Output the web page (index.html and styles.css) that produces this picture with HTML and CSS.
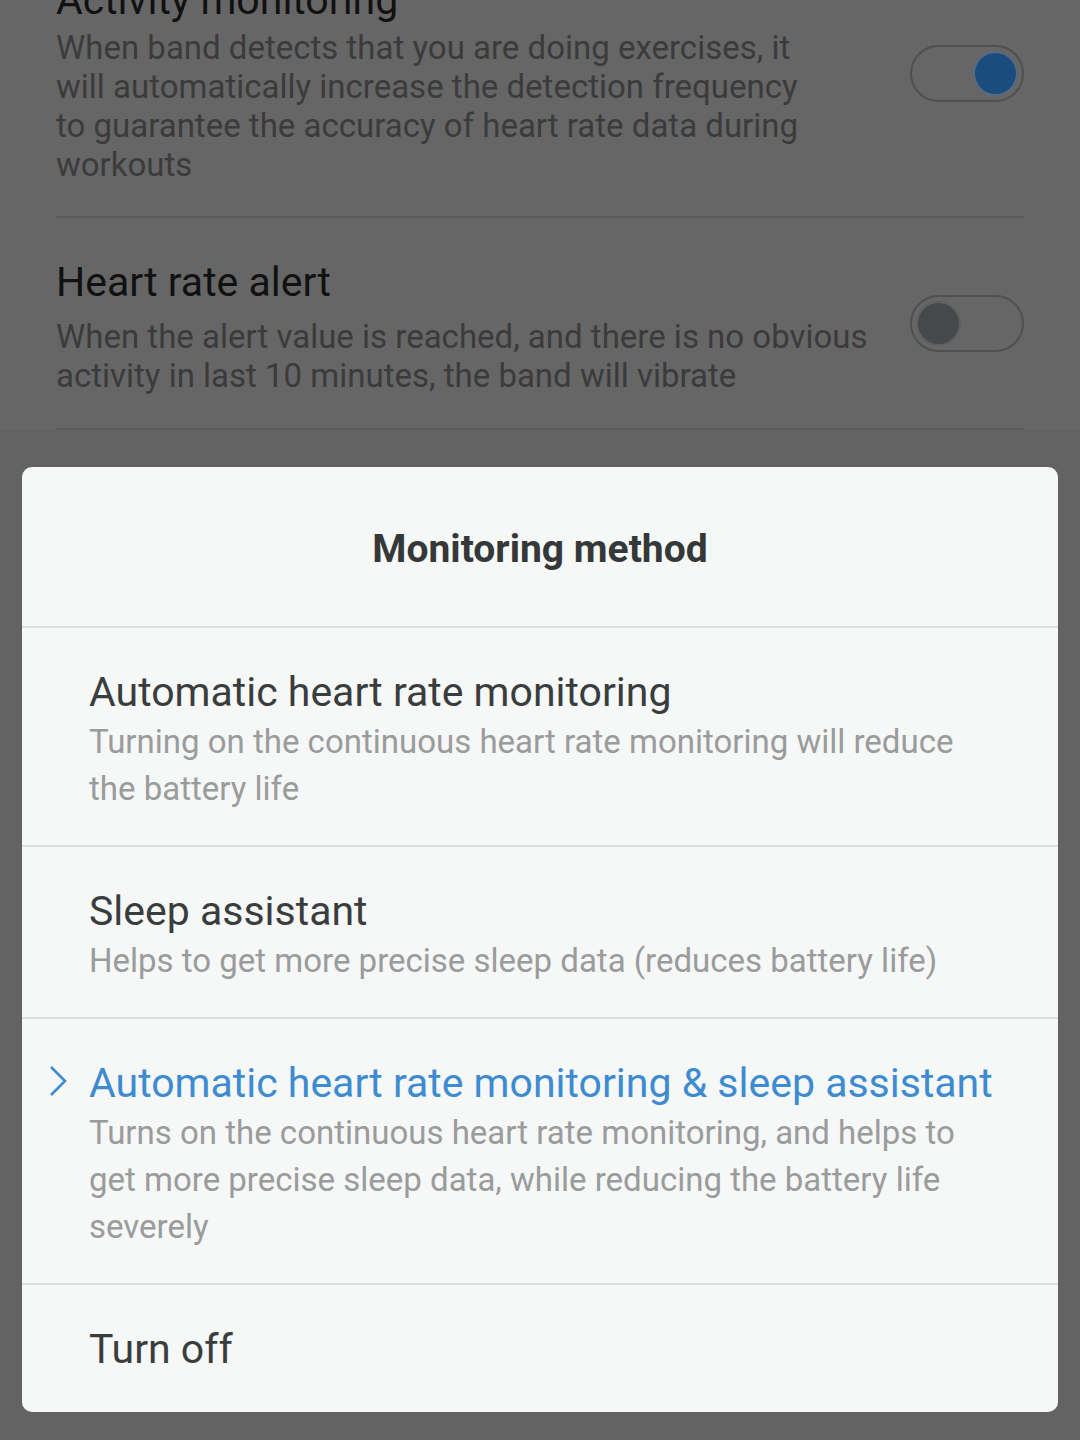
FILE: index.html
```html
<!DOCTYPE html>
<html lang="en">
<head>
<meta charset="utf-8">
<title>Monitoring method</title>
<link rel="stylesheet" href="styles.css">
</head>
<body>
<div class="screen">
  <div class="settings">
    <div class="setting setting-first">
      <div class="setting-text">
        <div class="setting-title">Activity monitoring</div>
        <div class="setting-desc">When band detects that you are doing exercises, it will automatically increase the detection frequency to guarantee the accuracy of heart rate data during workouts</div>
      </div>
      <div class="toggle toggle-on"><span class="knob"></span></div>
    </div>
    <div class="setting">
      <div class="setting-text">
        <div class="setting-title">Heart rate alert</div>
        <div class="setting-desc">When the alert value is reached, and there is no obvious activity in last 10 minutes, the band will vibrate</div>
      </div>
      <div class="toggle toggle-off"><span class="knob"></span></div>
    </div>
  </div>
  <div class="lower"></div>

  <div class="sheet">
    <div class="sheet-header">Monitoring method</div>
    <div class="option">
      <div class="option-title">Automatic heart rate monitoring</div>
      <div class="option-sub">Turning on the continuous heart rate monitoring will reduce the battery life</div>
    </div>
    <div class="option">
      <div class="option-title">Sleep assistant</div>
      <div class="option-sub">Helps to get more precise sleep data (reduces battery life)</div>
    </div>
    <div class="option option-selected">
      <svg class="chevron" width="20" height="32" viewBox="0 0 20 32"><path d="M3 2 L17 16 L3 30" fill="none" stroke="#3d8bd0" stroke-width="2.6"/></svg>
      <div class="option-title">Automatic heart rate monitoring &amp; sleep assistant</div>
      <div class="option-sub">Turns on the continuous heart rate monitoring, and helps to get more precise sleep data, while reducing the battery life severely</div>
    </div>
    <div class="option option-last">
      <div class="option-title option-off">Turn off</div>
    </div>
  </div>
</div>
</body>
</html>
```
FILE: styles.css
```css
* { box-sizing: border-box; }
html, body {
  margin: 0;
  padding: 0;
}
body {
  width: 1080px;
  height: 1440px;
  overflow: hidden;
  background: #636363;
  font-family: Roboto, "Noto Sans", "Liberation Sans", sans-serif;
}
.screen {
  position: relative;
  width: 1080px;
  height: 1440px;
  display: flex;
  flex-direction: column;
}
.settings {
  background: #666666;
  padding: 0 56px;
  margin-top: -24px;
}
.setting {
  display: flex;
  align-items: center;
  justify-content: space-between;
  border-bottom: 2px solid #5b5b5b;
  padding: 40px 0 33px;
}
.setting-first {
  padding-top: 0;
  padding-bottom: 32px;
  align-items: flex-start;
}
.setting-first .toggle { margin-top: 69px; }
.setting-first .setting-title { margin-bottom: 4px; }
.setting-first .setting-text { width: 760px; }
.setting-text {
  width: 830px;
}
.setting-title {
  font-size: 41px;
  line-height: 48px;
  color: #111111;
  margin-bottom: 11px;
}
.setting-desc {
  font-size: 33px;
  line-height: 39px;
  color: #3b3b3b;
}
.toggle {
  width: 114px;
  height: 57px;
  border: 2px solid #505050;
  border-radius: 29px;
  display: flex;
  align-items: center;
  padding: 0 6px;
  flex-shrink: 0;
}
.toggle-on { justify-content: flex-end; }
.toggle-off { justify-content: flex-start; margin-bottom: 6px; }
.knob {
  width: 41px;
  height: 41px;
  border-radius: 50%;
  display: block;
}
.toggle-on .knob { background: #1b4c7e; box-shadow: 0 0 0 2px #566a80; }
.toggle-off .knob { background: #46494b; box-shadow: 0 0 0 2px #5e625f; }
.lower {
  flex: 1;
  background: #636363;
}

.sheet {
  position: absolute;
  left: 22px;
  top: 467px;
  width: 1036px;
  height: 945px;
  background: #f6f7f7;
  border-radius: 10px;
  overflow: hidden;
  display: flex;
  flex-direction: column;
}
.sheet-header {
  height: 161px;
  flex-shrink: 0;
  display: flex;
  align-items: center;
  justify-content: center;
  font-size: 39px;
  font-weight: 700;
  color: #353839;
  border-bottom: 2px solid #dcdddd;
  padding-top: 4px;
}
.option {
  position: relative;
  padding: 38px 64px 33px 67px;
  border-bottom: 2px solid #dcdddd;
}
.option-last {
  border-bottom: none;
  padding-bottom: 37px;
}
.option-title {
  font-size: 41px;
  line-height: 52px;
  color: #3a3d3e;
}
.option-sub {
  font-size: 33px;
  line-height: 47px;
  color: #9a9c9c;
}
.option-selected .option-title { color: #3d8bd0; }
.chevron {
  position: absolute;
  left: 26px;
  top: 46px;
}
```
